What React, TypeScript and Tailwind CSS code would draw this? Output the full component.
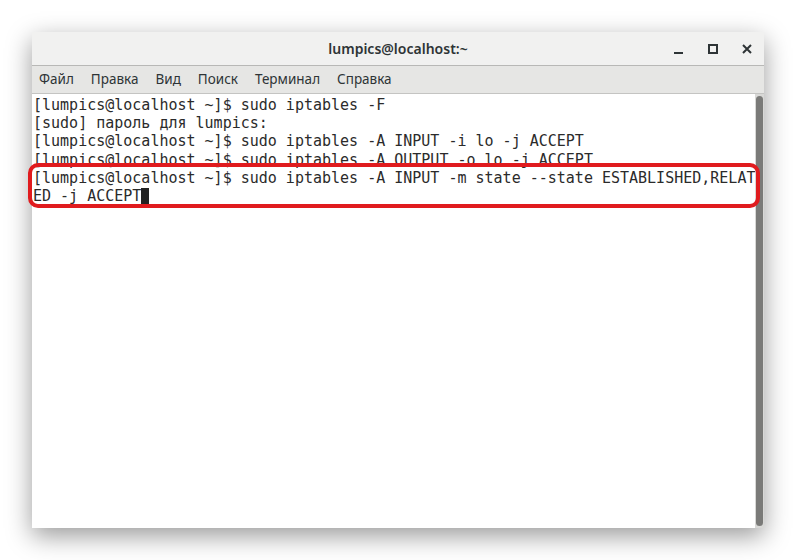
const lines = [
  "[lumpics@localhost ~]$ sudo iptables -F",
  "[sudo] пароль для lumpics:",
  "[lumpics@localhost ~]$ sudo iptables -A INPUT -i lo -j ACCEPT",
  "[lumpics@localhost ~]$ sudo iptables -A OUTPUT -o lo -j ACCEPT",
  "[lumpics@localhost ~]$ sudo iptables -A INPUT -m state --state ESTABLISHED,RELAT",
];

const menu = ["Файл", "Правка", "Вид", "Поиск", "Терминал", "Справка"];

export default function App() {
  return (
    <div className="w-[796px] h-[560px] bg-white pl-[32px] pt-[32px]">
      <div className="relative w-[732px] h-[496px] flex flex-col bg-white shadow-[0_8px_24px_rgba(0,0,0,0.4)]">
        {/* title bar */}
        <div className="h-[34px] flex items-center justify-center bg-[#f1f1f0] border-b border-[#b8b8b6] relative">
          <span className="font-['Noto_Sans',sans-serif] font-semibold text-[14px] text-[#2e3436]">lumpics@localhost:~</span>
          <div className="absolute right-[10px] top-0 h-full flex items-center gap-[20px]">
            <svg width="14" height="14" viewBox="0 0 14 14"><rect x="2" y="10" width="9" height="2" fill="#2e3436" /></svg>
            <svg width="14" height="14" viewBox="0 0 14 14"><rect x="3" y="3" width="8" height="8" fill="none" stroke="#2e3436" strokeWidth="2" /></svg>
            <svg width="14" height="14" viewBox="0 0 14 14"><path d="M3 3 L11 11 M11 3 L3 11" stroke="#2e3436" strokeWidth="2" /></svg>
          </div>
        </div>
        {/* menu bar */}
        <div className="h-[28px] flex items-center gap-[17px] bg-[#e6e6e4] border-b border-[#c4c4c2] pl-[7px] font-['Noto_Sans',sans-serif] text-[13.5px] text-[#2e3436]">
          {menu.map((m) => (
            <span key={m}>{m}</span>
          ))}
        </div>
        {/* terminal */}
        <div className="flex-1 flex">
          <div className="flex-1 pl-[1px] pt-[2px] font-['DejaVu_Sans_Mono',monospace] text-[15px] leading-[18.2px] text-[#2b2b2b] whitespace-pre">
            {lines.map((l, i) => (
              <div key={i}>{l}</div>
            ))}
            <div className="flex items-center">
              <span>ED -j ACCEPT</span>
              <span className="inline-block w-[8px] h-[17px] bg-[#222]" />
            </div>
          </div>
          <div className="w-[11px] bg-[#d8d8d6] py-[2px] flex justify-center">
            <div className="w-[7px] h-full rounded-full bg-[#7a7a78]" />
          </div>
        </div>
        {/* highlight */}
        <div className="absolute left-[-4px] top-[131px] w-[732px] h-[45px] rounded-[10px] border-[4px] border-[#e01b1e]" />
      </div>
    </div>
  );
}
